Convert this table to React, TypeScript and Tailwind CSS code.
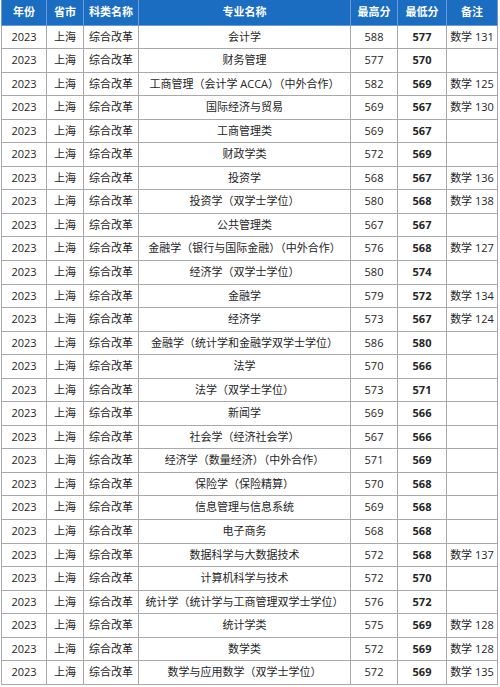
const rows: [string, string, string, string?][] = [
  ["会计学", "588", "577", "数学 131"],
  ["财务管理", "577", "570"],
  ["工商管理（会计学 ACCA）（中外合作）", "582", "569", "数学 125"],
  ["国际经济与贸易", "569", "567", "数学 130"],
  ["工商管理类", "569", "567"],
  ["财政学类", "572", "569"],
  ["投资学", "568", "567", "数学 136"],
  ["投资学（双学士学位）", "580", "568", "数学 138"],
  ["公共管理类", "567", "567"],
  ["金融学（银行与国际金融）（中外合作）", "576", "568", "数学 127"],
  ["经济学（双学士学位）", "580", "574"],
  ["金融学", "579", "572", "数学 134"],
  ["经济学", "573", "567", "数学 124"],
  ["金融学（统计学和金融学双学士学位）", "586", "580"],
  ["法学", "570", "566"],
  ["法学（双学士学位）", "573", "571"],
  ["新闻学", "569", "566"],
  ["社会学（经济社会学）", "567", "566"],
  ["经济学（数量经济）（中外合作）", "571", "569"],
  ["保险学（保险精算）", "570", "568"],
  ["信息管理与信息系统", "569", "568"],
  ["电子商务", "568", "568"],
  ["数据科学与大数据技术", "572", "568", "数学 137"],
  ["计算机科学与技术", "572", "570"],
  ["统计学（统计学与工商管理双学士学位）", "576", "572"],
  ["统计学类", "575", "569", "数学 128"],
  ["数学类", "572", "569", "数学 128"],
  ["数学与应用数学（双学士学位）", "572", "569", "数学 135"],
];

const headers = ["年份", "省市", "科类名称", "专业名称", "最高分", "最低分", "备注"];
const widths = ["w-[45px]", "w-[37px]", "w-[55px]", "w-[212px]", "w-[47px]", "w-[49px]", "w-[51px]"];

export default function App() {
  return (
    <div className="w-[500px] h-[687px] bg-white pl-px">
      <table
        className="table-fixed border-collapse w-[497px] text-[11px] text-[#262626] text-center"
        style={{ fontFamily: '"Open Sans", "Noto Sans CJK SC", sans-serif' }}
      >
        <colgroup>
          {widths.map((w, i) => (
            <col key={i} className={w} />
          ))}
        </colgroup>
        <thead>
          <tr className="h-[25px] bg-[#1b6dc1] text-white">
            {headers.map((h) => (
              <th key={h} className="border border-[#6b9bd6] border-t-0 font-bold p-0">
                {h}
              </th>
            ))}
          </tr>
        </thead>
        <tbody>
          {rows.map(([name, max, min, note], i) => (
            <tr key={i} className="h-[23.55px]">
              <td className="border border-[#a9a9a9] p-0">2023</td>
              <td className="border border-[#a9a9a9] p-0">上海</td>
              <td className="border border-[#a9a9a9] p-0">综合改革</td>
              <td className="border border-[#a9a9a9] p-0 whitespace-nowrap">{name}</td>
              <td className="border border-[#a9a9a9] p-0">{max}</td>
              <td className="border border-[#a9a9a9] p-0 font-bold">{min}</td>
              <td className="border border-[#a9a9a9] p-0 whitespace-nowrap">{note ?? ""}</td>
            </tr>
          ))}
        </tbody>
      </table>
    </div>
  );
}
